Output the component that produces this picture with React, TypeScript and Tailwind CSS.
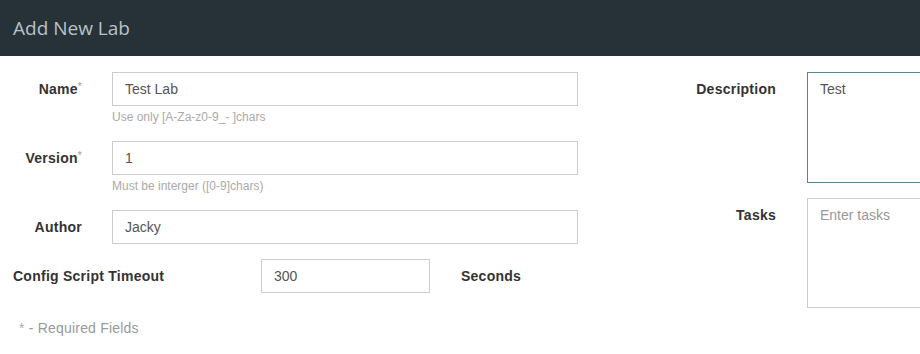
import React from "react";

const font = { fontFamily: '"Liberation Sans", Arial, sans-serif' };

function Label({ text, req }: { text: string; req?: boolean }) {
  return (
    <div className="w-[82px] shrink-0 text-right text-[14px] font-bold text-[#333] tracking-[0.25px]">
      {text}
      {req && <span className="font-normal text-[#999] text-[10px] align-top">*</span>}
    </div>
  );
}

export default function App() {
  return (
    <div className="w-[920px] h-[354px] overflow-hidden bg-white" style={font}>
      <div className="h-[56px] bg-[#263238] flex items-center pl-[13px]">
        <h1 className="text-[19px] text-[#b8c2c8]" style={{ fontFamily: '"Open Sans", sans-serif' }}>
          Add New Lab
        </h1>
      </div>
      <div className="flex pt-[16px]">
        <div className="w-[620px] shrink-0">
          <div className="flex items-center gap-[30px]">
            <Label text="Name" req />
            <input
              readOnly
              value="Test Lab"
              className="w-[466px] h-[34px] border border-[#ccc] px-[12px] text-[14px] text-[#555] outline-none"
            />
          </div>
          <div className="ml-[112px] mt-[3px] text-[12px] leading-[17px] text-[#aaa]">Use only [A-Za-z0-9_- ]chars</div>
          <div className="flex items-center gap-[30px] mt-[15px]">
            <Label text="Version" req />
            <input
              readOnly
              value="1"
              className="w-[466px] h-[34px] border border-[#ccc] px-[12px] text-[14px] text-[#555] outline-none"
            />
          </div>
          <div className="ml-[112px] mt-[3px] text-[12px] leading-[17px] text-[#aaa]">Must be interger ([0-9]chars)</div>
          <div className="flex items-center gap-[30px] mt-[15px]">
            <Label text="Author" />
            <input
              readOnly
              value="Jacky"
              className="w-[466px] h-[34px] border border-[#ccc] px-[12px] text-[14px] text-[#555] outline-none"
            />
          </div>
          <div className="flex items-center mt-[15px] pl-[13px]">
            <div className="w-[248px] text-[14px] font-bold text-[#333] tracking-[0.25px]">Config Script Timeout</div>
            <input
              readOnly
              value="300"
              className="w-[169px] h-[34px] border border-[#ccc] px-[12px] text-[14px] text-[#555] outline-none"
            />
            <div className="ml-[31px] text-[14px] font-bold text-[#333] tracking-[0.25px]">Seconds</div>
          </div>
          <div className="mt-[25px] pl-[19px] text-[14px] leading-[20px] text-[#999] tracking-[0.2px]">
            <span className="text-[#aaa]">*</span> - Required Fields
          </div>
        </div>
        <div className="flex-1">
          <div className="flex gap-[31px]">
            <div className="w-[156px] shrink-0 text-right text-[14px] font-bold text-[#333] pt-[7px] tracking-[0.25px]">Description</div>
            <textarea
              readOnly
              value="Test"
              className="w-[300px] h-[111px] shrink-0 border border-[#4a8a9c] px-[12px] pt-[6px] text-[14px] text-[#555] outline-none resize-none"
            />
          </div>
          <div className="flex gap-[31px] mt-[15px]">
            <div className="w-[156px] shrink-0 text-right text-[14px] font-bold text-[#333] pt-[7px] tracking-[0.25px]">Tasks</div>
            <textarea
              readOnly
              placeholder="Enter tasks"
              className="w-[300px] h-[110px] shrink-0 border border-[#ccc] px-[12px] pt-[6px] text-[14px] text-[#555] placeholder:text-[#999] outline-none resize-none"
            />
          </div>
        </div>
      </div>
    </div>
  );
}
